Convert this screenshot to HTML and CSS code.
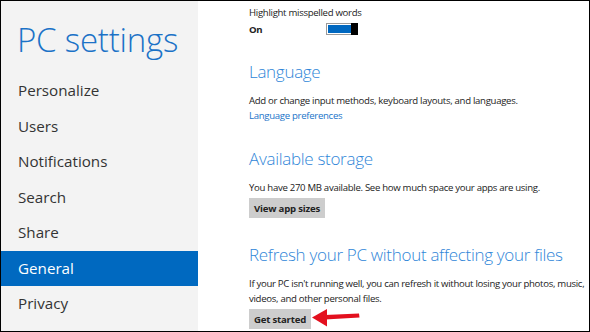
FILE: index.html
```html
<!DOCTYPE html>
<html lang="en">
<head>
  <meta charset="UTF-8" />
  <title>PC settings</title>
  <link rel="stylesheet" href="styles.css">
</head>
<body>

  <div class="screen">
    <div class="sidebar">
      <h1>PC settings</h1>
      <ul class="menu">
        <li>Personalize</li>
        <li>Users</li>
        <li>Notifications</li>
        <li>Search</li>
        <li>Share</li>
        <li class="active">General</li>
        <li>Privacy</li>
      </ul>
    </div>

    <div class="content">
      <div class="setting">
        <div class="label">Highlight misspelled words</div>
        <div class="toggle-row">
          <span class="state">On</span>
          <span class="toggle"><span class="fill"></span><span class="thumb"></span></span>
        </div>
      </div>

      <div class="section first">
        <h2>Language</h2>
        <p>Add or change input methods, keyboard layouts, and languages.</p>
        <a href="#">Language preferences</a>
      </div>

      <div class="section">
        <h2>Available storage</h2>
        <p>You have 270 MB available. See how much space your apps are using.</p>
        <button class="btn">View app sizes</button>
      </div>

      <div class="section">
        <h2>Refresh your PC without affecting your files</h2>
        <p>If your PC isn't running well, you can refresh it without losing your photos, music, videos, and other personal files.</p>
        <div class="btn-row">
          <button class="btn">Get started</button>
          <svg class="arrow" width="50" height="20" viewBox="0 0 50 20">
            <path d="M14 7 L48 5.5 L48.5 9.5 L14 11.5 Z" fill="#e3101e"/>
            <path d="M1 9.5 L16 1 L16 18.5 Z" fill="#e3101e"/>
          </svg>
        </div>
      </div>
    </div>
  </div>

</body>
</html>
```

FILE: styles.css
```css
body {
  margin: 0;
  font-family: 'Open Sans', 'Noto Sans', sans-serif;
}

.screen {
  width: 590px;
  height: 332px;
  box-sizing: border-box;
  border: 1px solid #000;
  display: flex;
  overflow: hidden;
  background: #fff;
}

.sidebar {
  width: 197px;
  flex-shrink: 0;
  background: #f3f3f3;
}

.sidebar h1 {
  margin: 17px 0 11px 16px;
  font-size: 33px;
  font-weight: 300;
  color: #1b72c7;
  line-height: 44px;
  letter-spacing: -0.2px;
}

.menu {
  list-style: none;
  margin: 0;
  padding: 0;
}

.menu li {
  height: 35.5px;
  line-height: 35px;
  padding-left: 17px;
  font-size: 15.2px;
  color: #333;
}

.menu li.active {
  background: #0069c0;
  color: #fff;
}

.content {
  padding-left: 51px;
  font-size: 9.6px;
  letter-spacing: -0.3px;
  color: #222;
}

.setting .label {
  margin-top: 4px;
  line-height: 15px;
}

.toggle-row {
  display: flex;
  align-items: center;
  height: 18px;
}

.state {
  width: 77px;
  font-weight: 700;
}

.toggle {
  display: flex;
  width: 32px;
  height: 12px;
  box-sizing: border-box;
  border: 1px solid #9a9a9a;
  border-right: none;
  background: #fff;
  padding: 1px 0 1px 1px;
}

.toggle .fill {
  flex: 1;
  background: #0068c0;
}

.toggle .thumb {
  width: 7px;
  margin: -2px 0;
  background: #000;
}

.section {
  margin-top: 24px;
}

.section.first {
  margin-top: 21px;
}

.section h2 {
  margin: 0 0 8px;
  font-size: 17px;
  font-weight: 300;
  letter-spacing: -0.3px;
  color: #2f86d8;
  line-height: 26px;
}

.section p {
  margin: 0 0 1px;
  line-height: 15px;
}

.section a {
  color: #1a74c9;
  text-decoration: none;
}

.btn {
  border: none;
  background: #cdcdcd;
  font-family: inherit;
  font-size: 9.6px;
  font-weight: 700;
  letter-spacing: -0.2px;
  color: #222;
  padding: 3px 5px;
  height: 20px;
  margin-top: 2px;
}

.btn-row {
  display: flex;
  align-items: center;
  gap: 0;
}
```
